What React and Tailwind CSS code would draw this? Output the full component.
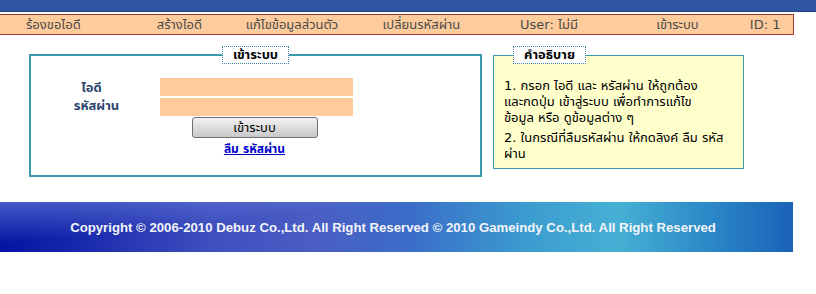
import React from "react";

const NAV = [
  { label: "ร้องขอไอดี", cls: "w-[138px] justify-start pl-[26px]" },
  { label: "สร้างไอดี", cls: "w-[84px] justify-center" },
  { label: "แก้ไขข้อมูลส่วนตัว", cls: "w-[142px] justify-center" },
  { label: "เปลี่ยนรหัสผ่าน", cls: "w-[118px] justify-center" },
  { label: "User: ไม่มี", cls: "w-[138px] justify-center" },
  { label: "เข้าระบบ", cls: "w-[120px] justify-center" },
  { label: "ID: 1", cls: "w-[56px] justify-center" },
];

const font = "font-['Tahoma','DejaVu_Sans','Noto_Sans_Thai',sans-serif]";

const App = () => {
  return (
    <div className={`w-[816px] h-[294px] bg-white text-[13px] ${font}`}>
      {/* top strip */}
      <div className="h-[12px] bg-[#3156a4] border-b border-[#23407f]" />

      {/* menu bar */}
      <div className="mt-[2px] w-[794px] h-[21px] bg-[#fecc9c] border-y border-r border-[#a33a3a] flex items-center text-[#4a4a4a]">
        {NAV.map((item) => (
          <div key={item.label} className={`flex whitespace-nowrap ${item.cls}`}>
            {item.label}
          </div>
        ))}
      </div>

      {/* content */}
      <div className="flex items-start mt-[11px] pl-[29px]">
        {/* login box */}
        <fieldset className="w-[453px] h-[131px] border-2 border-[#3a9aac] px-0">
          <legend
            align="center"
            className="h-[18px] px-[10px] border border-dotted border-[#3d7fa5] bg-white font-bold text-black leading-[16px] mr-[4px]"
          >
            เข้าระบบ
          </legend>
          <div className="flex mt-[14px]">
            <div className="w-[129px] flex flex-col items-center pl-[2px] font-bold text-[#2e466e] leading-[18px] pt-[1px]">
              <span className="mr-[10px]">ไอดี</span>
              <span>รหัสผ่าน</span>
            </div>
            <div className="flex flex-col gap-[2px]">
              <input className="w-[193px] h-[18px] bg-[#fecc9c] outline-none" />
              <input type="password" className="w-[193px] h-[18px] bg-[#fecc9c] outline-none" />
            </div>
          </div>
          <div className="flex flex-col items-center mt-[1px] mr-[2px]">
            <button className="w-[126px] h-[21px] rounded-[3px] border border-[#707070] bg-[linear-gradient(#f4f4f4,#dcdcdc_50%,#c9c9c9)] text-black leading-[18px]">
              เข้าระบบ
            </button>
            <a href="#" className="mt-[3px] text-[12px] font-bold text-[#0000cc] underline leading-[16px]">
              ลืม รหัสผ่าน
            </a>
          </div>
        </fieldset>

        {/* description box */}
        <fieldset className="ml-[11px] w-[251px] h-[123px] border border-[#3a9aac] bg-[#ffffcc] px-[10px]">
          <legend className="ml-[9px] h-[18px] px-[10px] border border-dotted border-[#3d7fa5] bg-white font-bold text-black leading-[16px]">
            คำอธิบาย
          </legend>
          <div className="mt-[14px] text-black leading-[16px]">
            <p>
              1. กรอก ไอดี และ หรัสผ่าน ให้ถูกต้อง
              <br />
              และกดปุ่ม เข้าสู่ระบบ เพื่อทำการแก้ไข
              <br />
              ข้อมูล หรือ ดูข้อมูลต่าง ๆ
            </p>
            <p className="mt-[4px]">
              2. ในกรณีที่ลืมรหัสผ่าน ให้กดลิงค์ ลืม รหัส
              <br />
              ผ่าน
            </p>
          </div>
        </fieldset>
      </div>

      {/* footer */}
      <div className="mt-[25px] w-[793px] h-[50px] flex items-center justify-center pr-[7px] pt-[2px] bg-[linear-gradient(174deg,rgba(130,160,235,0.5)_0%,rgba(130,160,235,0)_32%),linear-gradient(90deg,#0414a2_0%,#1828ac_10%,#3e4fbf_26%,#4a5ec4_40%,#3a6ec8_52%,#3b9bcf_66%,#46b0d4_78%,#2a86c6_90%,#1a62b8_100%)]">
        <span className="font-['Liberation_Sans',Arial,sans-serif] font-bold text-[13.2px] text-[#f2f4fa]">
          Copyright © 2006-2010 Debuz Co.,Ltd. All Right Reserved © 2010 Gameindy Co.,Ltd. All Right Reserved
        </span>
      </div>
    </div>
  );
};

export default App;
